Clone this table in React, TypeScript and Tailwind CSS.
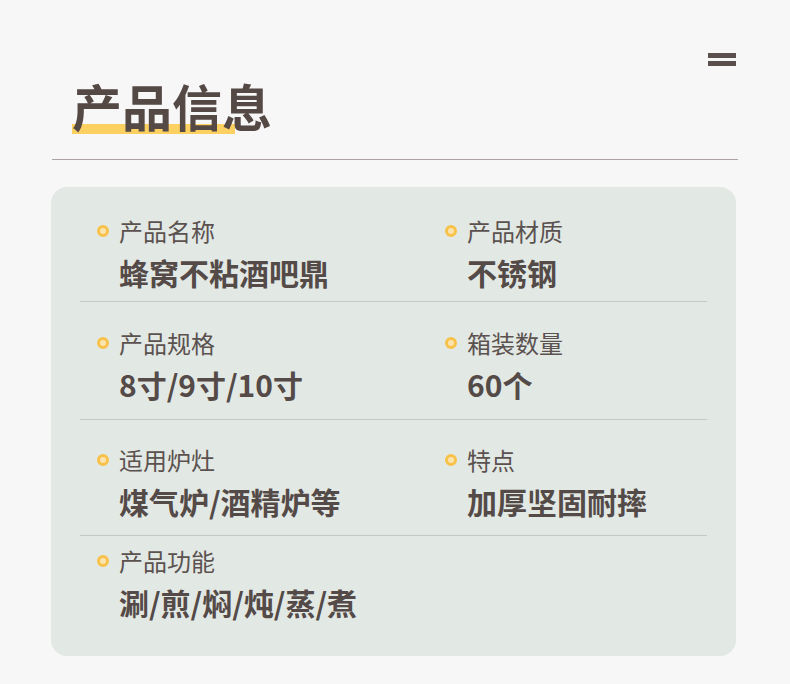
import React from "react";

type Item = { label: string; value: string };

const rows: { items: Item[]; pad: string }[] = [
    {
        items: [
            { label: "产品名称", value: "蜂窝不粘酒吧鼎" },
            { label: "产品材质", value: "不锈钢" },
        ],
        pad: "pt-[29px] pb-[11px]",
    },
    {
        items: [
            { label: "产品规格", value: "8寸/9寸/10寸" },
            { label: "箱装数量", value: "60个" },
        ],
        pad: "pt-[26px] pb-[17px]",
    },
    {
        items: [
            { label: "适用炉灶", value: "煤气炉/酒精炉等" },
            { label: "特点", value: "加厚坚固耐摔" },
        ],
        pad: "pt-[25px] pb-[16px]",
    },
    {
        items: [{ label: "产品功能", value: "涮/煎/焖/炖/蒸/煮" }],
        pad: "pt-[10px] pb-[36px]",
    },
];

const Field: React.FC<{ item: Item }> = ({ item }) => (
    <div className="flex flex-col gap-[8px]">
        <div className="flex items-center gap-[10px]">
            <span className="w-[12px] h-[12px] rounded-full border-[3px] border-[#f8c24a] bg-[#fbe4ad]"></span>
            <span className="text-[24px] leading-[30px] text-[#5b5250]">{item.label}</span>
        </div>
        <div className="pl-[22px] text-[30px] leading-[36px] font-bold text-[#544a47]">
            {item.value}
        </div>
    </div>
);

const App: React.FC = () => {
    return (
        <div
            className="w-[790px] h-[684px] bg-[#f7f7f7] pt-[53px] overflow-hidden"
            style={{ fontFamily: '"Noto Sans CJK SC", "Noto Sans", sans-serif' }}
        >
            <div className="flex justify-between items-start ml-[72px] mr-[54px]">
                <div className="relative mt-[27px] h-[50px]">
                    <div className="absolute left-0 top-[44px] w-[163px] h-[10px] bg-[#fdd062]"></div>
                    <h1 className="relative text-[50px] leading-[50px] font-bold text-[#554946]">
                        产品信息
                    </h1>
                </div>
                <div className="flex flex-col gap-[3px]">
                    <span className="block w-[28px] h-[5px] bg-[#5a4f4c]"></span>
                    <span className="block w-[28px] h-[5px] bg-[#5a4f4c]"></span>
                </div>
            </div>

            <div className="ml-[52px] w-[686px] h-px bg-[#aaa3a2] mt-[29px]"></div>

            <div className="ml-[51px] w-[685px] mt-[27px] rounded-[16px] bg-[#e2e8e4] px-[29px]">
                {rows.map((row, i) => (
                    <div key={i}>
                        {i > 0 && <div className="h-px bg-[#c5c8c5]"></div>}
                        <div className={`grid grid-cols-[348px_1fr] pl-[17px] ${row.pad}`}>
                            {row.items.map((item) => (
                                <Field key={item.label} item={item} />
                            ))}
                        </div>
                    </div>
                ))}
            </div>
        </div>
    );
};

export default App;
